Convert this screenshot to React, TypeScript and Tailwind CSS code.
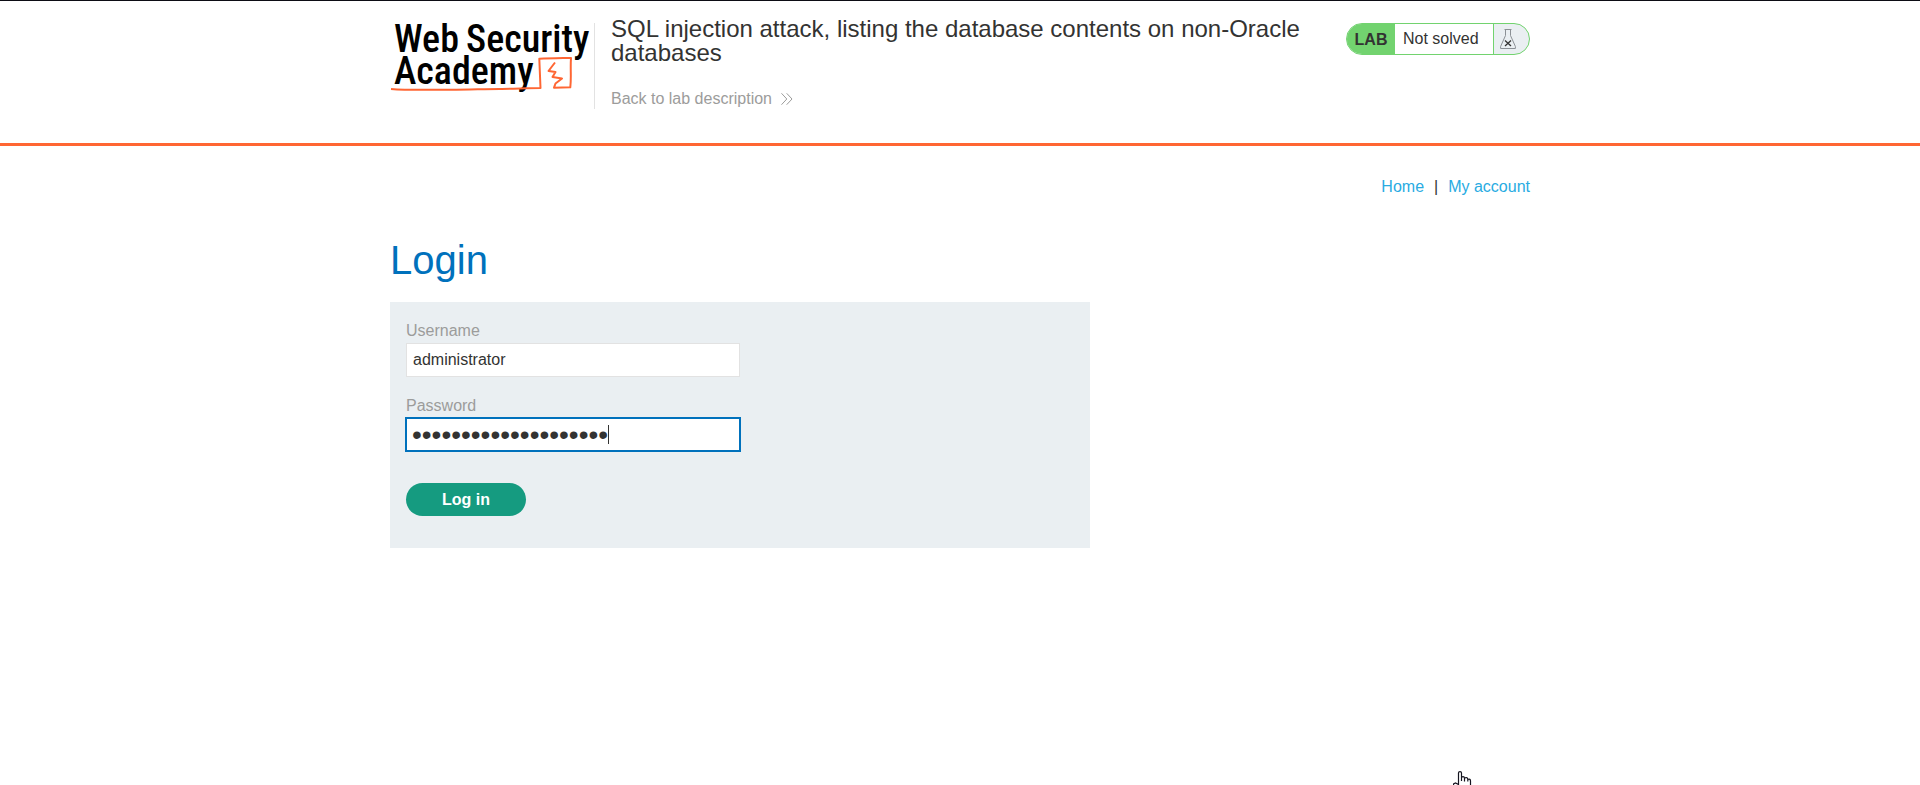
import React from "react";

function AcademyLogo() {
  return (
    <svg width="202" height="88" viewBox="0 -12 202 88" role="img" aria-label="Web Security Academy" className="block shrink-0">
      <g fill="#000" fontFamily="'Roboto Condensed', 'Liberation Sans Narrow', sans-serif" fontSize="38" fontWeight="500">
        <text x="4" y="32.500">Web</text>
        <text x="76" y="32.500">Security</text>
        <text x="4" y="65">Academy</text>
      </g>
      <path d="M1 70C18 71.400 40 70.800 60 70.700C85 70.500 95 69.800 112 69.900C125 69.900 136 69 150.500 69L149.300 39.800C160 39.200 170 39.200 181 39C180.200 49 181.500 59 180.300 68.300L164 68.700L165.500 64.500L172 59.500L162.500 58L165.500 53L158.500 52L165 43.500" fill="none" stroke="#ff6633" strokeWidth="2" strokeLinejoin="round" />
    </svg>
  );
}

function Chevrons() {
  return (
    <svg width="12" height="12" viewBox="0 0 12 12" aria-hidden="true" className="block">
      <path d="M0.500 0.300L5.800 6L0.500 11.700M5.700 0.300L11 6L5.700 11.700" fill="none" stroke="#9c9c9b" strokeWidth="1" />
    </svg>
  );
}

function Flask() {
  return (
    <svg width="16" height="20" viewBox="0 0 16 20" aria-hidden="true" className="block">
      <path d="M4.500 0.500H11.500M5.500 0.500V6.500L0.600 17.500V19.500H15.400V17.500L10.500 6.500V0.500" fill="none" stroke="#8b9095" strokeWidth="1" />
      <path d="M5 11.500L11 17M11 11.500L5 17" fill="none" stroke="#333332" strokeWidth="1.300" />
    </svg>
  );
}

function HandPointer() {
  return (
    <svg width="20" height="14" viewBox="0 0 20 14" aria-hidden="true" className="absolute bottom-0 left-[1453px]">
      <path d="M0.500 14V13L2.500 12L5.500 13.500V2Q5.500 0.700 7 0.700Q8.500 0.700 8.500 2V7Q8.500 5.700 10 5.700Q11.500 5.700 11.500 7.500Q12 6.500 13.500 6.500Q14.800 6.800 14.800 8.500Q17.500 7.500 17.500 10V14M8.500 7V10M11.500 7.500V10.500M14.800 8.500V10.500" fill="#fff" stroke="#14141f" strokeWidth="1.200" />
    </svg>
  );
}

export default function App() {
  return (
    <div className="relative min-h-screen overflow-hidden bg-white font-['Liberation_Sans',Arial,sans-serif] text-base leading-6 text-[#333332]">
      <header className="border-t border-b-[3px] border-t-[#0c0c14] border-b-[#ff6633] pb-8">
        <div className="mx-auto flex max-w-[1140px] items-start">
          <a href="#academy" className="mt-1.5 block"><AcademyLogo /></a>
          <div className="mt-[22px] ml-0.5 h-[86px] w-px bg-[#e2e2e2]" />
          <div className="ml-4 min-w-0 flex-1 pt-4 pr-4">
            <h2 className="max-w-[700px] text-2xl leading-6">SQL injection attack, listing the database contents on non-Oracle databases</h2>
            <a href="#description" className="mt-[22px] flex w-fit items-center gap-[9px] text-[#9c9c9b]">
              Back to lab description
              <Chevrons />
            </a>
          </div>
          <div className="mt-[22px] flex h-8 w-[184px] shrink-0 overflow-hidden rounded-full border border-[#72d36f] bg-[#eaeff2]">
            <p className="flex w-12 items-center justify-center bg-[#72d36f] pt-0.5 font-bold">LAB</p>
            <p className="flex flex-1 items-center border-r border-[#72d36f] bg-white pl-2">Not solved</p>
            <span className="flex w-[35px] items-center pl-1.5"><Flask /></span>
          </div>
        </div>
      </header>

      <main className="mx-auto max-w-[1140px] pt-[29px]">
        <nav className="flex justify-end gap-2.5">
          <a href="#home" className="text-[#29abe2]">Home</a>
          <span>|</span>
          <a href="#account" className="text-[#29abe2]">My account</a>
        </nav>
        <h1 className="mt-[37px] text-[40px] leading-[48px] text-[#0071bc]">Login</h1>
        <form className="mt-[18px] max-w-[700px] bg-[#eaeff2] px-4 pt-[17px] pb-8" onSubmit={(e) => e.preventDefault()}>
          <label htmlFor="username" className="block text-[#9c9c9b]">Username</label>
          <input id="username" type="text" defaultValue="administrator" className="block h-[34px] w-1/2 border border-[#e2e2e2] bg-white px-1.5 outline-none" />
          <label htmlFor="password" className="mt-[17px] block text-[#9c9c9b]">Password</label>
          <div className="relative w-1/2">
            <input id="password" type="password" defaultValue="administrator1234567" className="block h-[33px] w-full bg-white px-1.5 text-[28px] outline-2 -outline-offset-1 outline-[#0071bc]" />
            <span className="absolute top-[7px] left-[202px] h-[19px] w-px bg-[#333332]" />
          </div>
          <button type="submit" className="mt-8 block h-[33px] w-[120px] rounded-full bg-[#159b80] font-bold text-white">Log in</button>
        </form>
      </main>
      <HandPointer />
    </div>
  );
}
